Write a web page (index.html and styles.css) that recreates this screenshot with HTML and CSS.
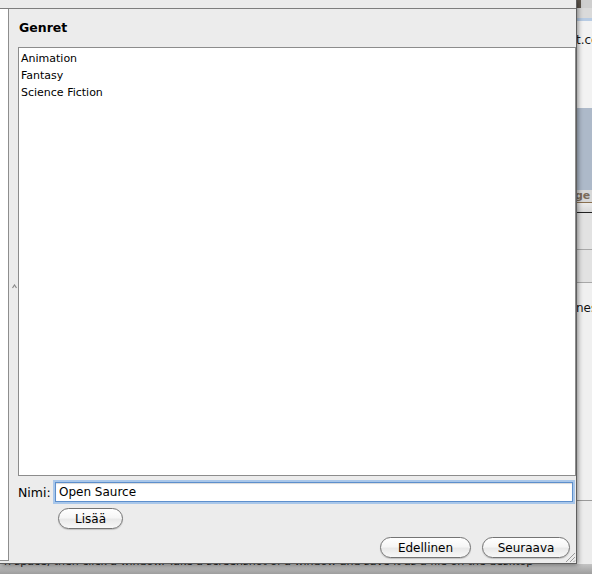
FILE: index.html
```html
<!DOCTYPE html>
<html lang="fi">
<head>
<meta charset="utf-8">
<title>Genret</title>
<link rel="stylesheet" href="styles.css">
</head>
<body>
<div class="screen">
  <div class="window">
    <div class="topstrip"></div>
    <div class="main">
      <div class="leftpane"></div>
      <div class="divider">
        <svg class="grip" width="5" height="5" viewBox="0 0 5 5"><path d="M0.5 4 L2.5 1 L4.5 4" fill="none" stroke="#8a8a8a" stroke-width="1.2"/></svg>
      </div>
      <div class="content">
        <h1 class="title">Genret</h1>
        <ul class="list">
          <li>Animation</li>
          <li>Fantasy</li>
          <li>Science Fiction</li>
        </ul>
        <div class="name-row">
          <label class="name-label">Nimi:</label>
          <div class="field">Open Saurce</div>
        </div>
        <div class="add-row"><button class="btn btn-add">Lisää</button></div>
        <div class="nav-row">
          <button class="btn btn-prev">Edellinen</button>
          <button class="btn btn-next">Seuraava</button>
        </div>
      </div>
    </div>
    <svg class="resize" width="12" height="12" viewBox="0 0 12 12">
      <path d="M11 2 L2 11 M11 6 L6 11 M11 9.5 L9.5 11" stroke="#9c9c9c" stroke-width="1" fill="none"/>
    </svg>
  </div>
  <div class="side">
    <div class="s-top"></div>
    <div class="s-light"></div>
    <div class="s-blueline"></div>
    <div class="s-url">t.co</div>
    <div class="s-blue"></div>
    <div class="s-ge">ge</div>
    <div class="s-bar"></div>
    <div class="s-row"></div>
    <div class="s-row s-row2"></div>
    <div class="s-text">nes</div>
    <div class="s-white"></div>
    <div class="s-rest"></div>
  </div>
  <div class="bottom"><p class="bottom-text">n space, then click a window. Take a screenshot of a window and save it as a file on the desktop</p></div>
</div>
</body>
</html>
```
FILE: styles.css
```css
* { box-sizing: border-box; }
html, body { margin: 0; padding: 0; }
body {
  width: 592px;
  height: 574px;
  overflow: hidden;
  font-family: "DejaVu Sans", "Liberation Sans", sans-serif;
  background: #a8a8a8;
}
.screen {
  display: grid;
  grid-template-columns: 577px 15px;
  grid-template-rows: 564px 10px;
  width: 592px;
  height: 574px;
  overflow: hidden;
}
.window {
  position: relative;
  z-index: 2;
  grid-column: 1;
  grid-row: 1;
  display: flex;
  flex-direction: column;
  background: #ececec;
  border-right: 1px solid #5f5f5f;
  border-bottom: 1px solid #5f5f5f;
  box-shadow: 1px 1px 5px rgba(0,0,0,0.45);
}
.topstrip {
  height: 9px;
  flex: none;
  background: #ebebeb;
  border-bottom: 1px solid #7d7d7d;
}
.main {
  flex: 1;
  display: flex;
  min-height: 0;
}
.leftpane {
  width: 9px;
  flex: none;
  background: #fff;
  border-right: 1px solid #8e8e8e;
  border-bottom: 1px solid #8e8e8e;
  margin-bottom: 2px;
}
.divider {
  width: 9px;
  flex: none;
  display: flex;
  align-items: center;
  justify-content: center;
}
.grip { display: block; margin-left: 1px; }
.content {
  flex: 1;
  display: flex;
  flex-direction: column;
  padding: 11px 0 5px 0;
  min-width: 0;
}
.title {
  margin: 0 0 11px 1px;
  height: 16px;
  font-size: 12.5px;
  line-height: 16px;
  font-weight: bold;
  color: #000;
}
.list {
  flex: 1;
  margin: 0;
  padding: 2px 2px;
  list-style: none;
  background: #fff;
  border: 1px solid #8c8c8c;
  font-size: 11px;
  line-height: 17px;
  color: #000;
}
.name-row {
  display: flex;
  align-items: center;
  margin-top: 6px;
  height: 20px;
}
.name-label {
  font-size: 12.5px;
  color: #000;
  width: 34px;
  flex: none;
}
.field {
  flex: 1;
  height: 20px;
  margin: 0 3px 0 3px;
  padding: 0 3px;
  background: #fff;
  border: 1px solid #5d8fcc;
  box-shadow: 0 0 0 2px #a9c7ea, inset 0 1px 1px rgba(0,0,0,0.15);
  font-size: 12px;
  line-height: 18px;
  color: #000;
}
.add-row {
  margin-top: 6px;
  height: 21px;
  display: flex;
}
.btn {
  height: 21px;
  padding: 0;
  font-family: "DejaVu Sans", "Liberation Sans", sans-serif;
  font-size: 12px;
  color: #000;
  border: 1px solid #747474;
  border-radius: 11px;
  background: linear-gradient(#ffffff 0%, #f6f6f6 45%, #e9e9e9 55%, #f8f8f8 100%);
  box-shadow: 0 1px 1px rgba(0,0,0,0.18);
}
.btn-add { margin-left: 40px; width: 65px; }
.nav-row {
  margin-top: 8px;
  height: 21px;
  display: flex;
  justify-content: flex-end;
  gap: 11px;
  padding-right: 6px;
}
.btn-prev { width: 91px; }
.btn-next { width: 88px; }
.resize {
  position: absolute;
  right: 0;
  bottom: 0;
}
.side {
  grid-column: 2;
  grid-row: 1;
  display: flex;
  flex-direction: column;
  background: #e6e6e6;
  overflow: hidden;
  font-family: "DejaVu Sans", sans-serif;
}
.s-top { height: 8px; background: linear-gradient(90deg, #5d554c 0 4px, #cfcfcf 4px); }
.s-light { height: 10px; background: #dadada; }
.s-blueline { height: 3px; background: #b7cbe3; }
.s-url {
  height: 87px;
  background: #f2f2f2;
  font-size: 12px;
  line-height: 14px;
  padding-top: 12px;
  color: #1a1a1a;
  white-space: nowrap;
  margin-left: -1px;
}
.s-blue { height: 82px; background: #adb9c9; }
.s-ge {
  height: 13px;
  background: #d8d8d8;
  font-size: 11px;
  font-weight: bold;
  line-height: 12px;
  color: #7a6a5a;
  margin-left: -2px;
  border-bottom: 1px solid #8a7050;
}
.s-bar { height: 10px; background: linear-gradient(#ececec, #d8d8d8); border-bottom: 1px solid #222; }
.s-row { height: 37px; background: #e2e2e2; border-bottom: 1px solid #a8a8a8; }
.s-row2 { height: 33px; }
.s-text {
  height: 40px;
  background: #f0f0f0;
  font-size: 12px;
  line-height: 14px;
  padding-top: 18px;
  color: #111;
  margin-left: -1px;
}
.s-white { height: 178px; background: #f0f0f0; border-bottom: 1px solid #9a9a9a; }
.s-rest { flex: 1; background: #ececec; }
.bottom {
  grid-column: 1 / span 2;
  grid-row: 2;
  background: linear-gradient(#c4c4c4, #9e9e9e);
  overflow: hidden;
}
.bottom-text {
  margin: -9px 0 0 4px;
  font-size: 11px;
  line-height: 13px;
  color: #1e1e1e;
  white-space: nowrap;
}
```
